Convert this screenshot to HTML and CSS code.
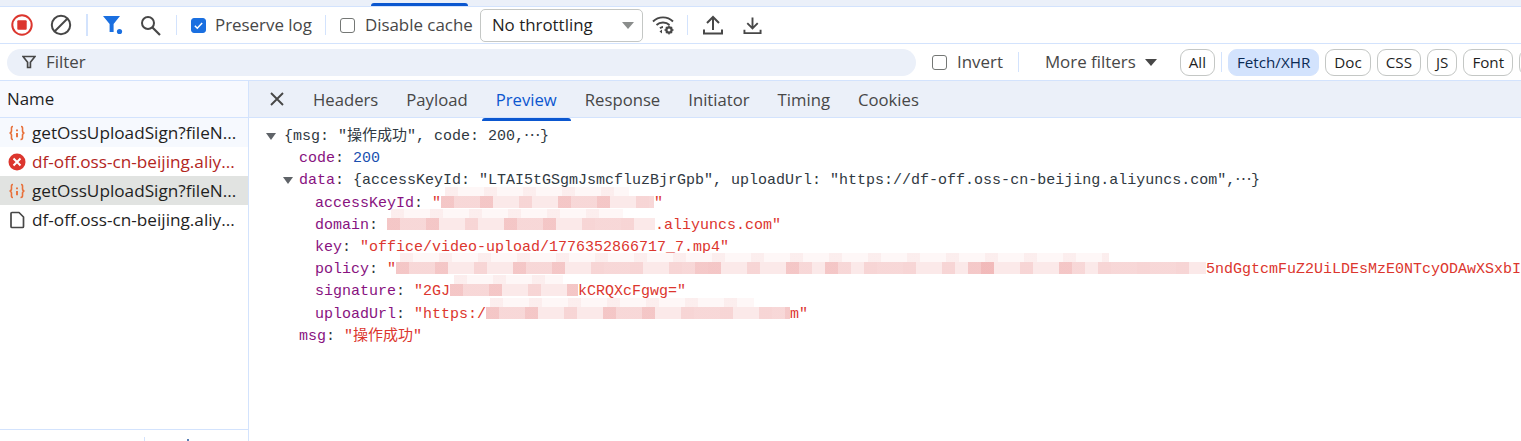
FILE: index.html
```html
<!DOCTYPE html>
<html lang="en">
<head>
<meta charset="utf-8">
<title>Network</title>
<link rel="stylesheet" href="styles.css">
</head>
<body>
<div class="topstrip"><span class="toptab"></span></div>
<div class="bar toolbar">
  <svg class="ic stop" viewBox="0 0 22 22"><circle cx="11" cy="11" r="9.7" fill="none" stroke="#dc362e" stroke-width="2"/><rect x="6.3" y="6.3" width="9.4" height="9.4" rx="1" fill="#dc362e"/></svg>
  <svg class="ic clear" viewBox="0 0 22 22"><circle cx="11" cy="11" r="9.2" fill="none" stroke="#474747" stroke-width="2"/><path d="M4.5 17.5 17.5 4.5" stroke="#474747" stroke-width="2"/></svg>
  <i class="sep s1"></i>
  <svg class="ic funnel" viewBox="0 0 20 20"><path d="M0 1h17l-6.4 8v8H6.6V9z" fill="#1a6fe0"/><circle cx="16.5" cy="16.5" r="2.6" fill="#1a6fe0"/></svg>
  <svg class="ic search" viewBox="0 0 21 21"><circle cx="8" cy="8" r="6" fill="none" stroke="#474747" stroke-width="2"/><path d="m12.5 12.5 7.5 7.5" stroke="#474747" stroke-width="2.2"/></svg>
  <i class="sep s2"></i>
  <span class="check on"><svg viewBox="0 0 16 16"><path d="m3.5 8.3 3 3 6-6.3" fill="none" stroke="#fff" stroke-width="1.9"/></svg></span>
  <span class="lbl preserve">Preserve log</span>
  <i class="sep s3"></i>
  <span class="check"></span>
  <span class="lbl disable">Disable cache</span>
  <span class="select"><span class="lift">No throttling</span><i class="caret"></i></span>
  <svg class="ic wifi" viewBox="0 0 23 20"><path d="M1 6.5C6.500 1 15.500 1 21 6.500M4.500 10c3.500-3.300 9.500-3.300 13 0M8 13.300c1-.9 2-1.300 3-1.300" fill="none" stroke="#474747" stroke-width="1.900"/><path d="m10 14.500-2.500 2 2.500 2z" fill="#474747"/><circle cx="17" cy="15" r="2.600" fill="none" stroke="#474747" stroke-width="2.200"/><path d="M17 10.500v1.500M17 18v1.500M12.500 15H14M20 15h1.500M13.900 11.900l1 1M19.100 17.100l1 1M13.900 18.100l1-1M19.100 12.900l1-1" stroke="#474747" stroke-width="1.300"/></svg>
  <i class="sep s4"></i>
  <svg class="ic up" viewBox="0 0 20 20"><path d="M10 15V2M4 8l6-6 6 6" fill="none" stroke="#474747" stroke-width="2"/><path d="M1 14.500V18.500H19V14.500" fill="none" stroke="#474747" stroke-width="2"/></svg>
  <svg class="ic down" viewBox="0 0 20 20"><path d="M10 1.500V12M4.500 7.500 10 13l5.500-5.500" fill="none" stroke="#474747" stroke-width="2"/><path d="M1.500 14.500v3.500h17v-3.500" fill="none" stroke="#474747" stroke-width="2"/></svg>
</div>
<div class="bar filterbar">
  <div class="filter">
    <svg class="ic fi" viewBox="0 0 14 14"><path d="M1 1.500h12L8.400 7.300v5.200H5.600V7.300z" fill="none" stroke="#474747" stroke-width="1.700"/></svg>
    <span class="lift">Filter</span>
  </div>
  <span class="check inv"></span>
  <span class="lbl invert">Invert</span>
  <i class="sep s5"></i>
  <span class="lbl more">More filters</span><i class="caret dark"></i>
  <span class="chip all">All</span>
  <i class="sep s6"></i>
  <span class="chip active">Fetch/XHR</span>
  <span class="chip">Doc</span>
  <span class="chip">CSS</span>
  <span class="chip">JS</span>
  <span class="chip">Font</span>
  <span class="chip stub"></span>
</div>
<div class="main">
  <aside class="side">
    <div class="namehead">Name</div>
    <div class="row tint"><svg class="fi-json" viewBox="0 0 18 18"><path d="M5 2.500C3 2.500 3.500 4 3.500 6.500 3.500 8 3 9 1.500 9 3 9 3.500 10 3.500 11.500 3.500 14 3 15.500 5 15.500M13 2.500c2 0 1.500 1.500 1.500 4 0 1.500.5 2.500 2 2.500-1.500 0-2 1-2 2.500 0 2.500.5 4-2 4" fill="none" stroke="#e8703a" stroke-width="1.600"/><path d="M9 5.500v1.800M9 9v4.200" stroke="#e8703a" stroke-width="1.900"/></svg><span>getOssUploadSign?fileN...</span></div>
    <div class="row err"><svg class="fi-err" viewBox="0 0 18 18"><circle cx="9" cy="9" r="8.500" fill="#dc362e"/><path d="m5.500 5.500 7 7M12.500 5.500l-7 7" stroke="#fff" stroke-width="2"/></svg><span>df-off.oss-cn-beijing.aliy...</span></div>
    <div class="row sel"><svg class="fi-json" viewBox="0 0 18 18"><path d="M5 2.500C3 2.500 3.500 4 3.500 6.500 3.500 8 3 9 1.500 9 3 9 3.500 10 3.500 11.500 3.500 14 3 15.500 5 15.500M13 2.500c2 0 1.500 1.500 1.500 4 0 1.500.5 2.500 2 2.500-1.500 0-2 1-2 2.500 0 2.500.5 4-2 4" fill="none" stroke="#e8703a" stroke-width="1.600"/><path d="M9 5.500v1.800M9 9v4.200" stroke="#e8703a" stroke-width="1.900"/></svg><span>getOssUploadSign?fileN...</span></div>
    <div class="row"><svg class="fi-doc" viewBox="0 0 18 18"><path d="M3 2.500a1 1 0 0 1 1-1h7l4.500 4.500v9.500a1 1 0 0 1-1 1H4a1 1 0 0 1-1-1z" fill="none" stroke="#474747" stroke-width="1.700" stroke-linejoin="round"/></svg><span>df-off.oss-cn-beijing.aliy...</span></div>
    <div class="sidefoot"><i class="fs"></i><i class="fd"></i></div>
  </aside>
  <section class="detail">
    <div class="tabs">
      <svg class="close" viewBox="0 0 14 14"><path d="m1 1 12 12M13 1 1 13" stroke="#474747" stroke-width="1.900"/></svg>
      <span class="tab">Headers</span>
      <span class="tab">Payload</span>
      <span class="tab current">Preview</span>
      <span class="tab">Response</span>
      <span class="tab">Initiator</span>
      <span class="tab">Timing</span>
      <span class="tab">Cookies</span>
    </div>
    <div class="tree">
      <div class="ln d0"><i class="tri"></i>{msg: <span class="cj">"操作成功"</span>, code: 200,<span class="dots">…</span>}</div>
      <div class="ln d1"><b>code</b>: <span class="num">200</span></div>
      <div class="ln d1"><i class="tri"></i><b>data</b>: {accessKeyId: "LTAI5tGSgmJsmcfluzBjrGpb", uploadUrl: "https://df-off.oss-cn-beijing.aliyuncs.com",<span class="dots">…</span>}</div>
      <div class="ln d2"><b>accessKeyId</b>: <em>"<span class="rd r1"></span>"</em></div>
      <div class="ln d2"><b>domain</b>: <em><span class="rd r2"></span>.aliyuncs.com"</em></div>
      <div class="ln d2"><b>key</b>: <em>"office/video-upload/1776352866717_7.mp4"</em></div>
      <div class="ln d2"><b>policy</b>: <em>"<span class="rd r3"></span>5ndGgtcmFuZ2UiLDEsMzE0NTcyODAwXSxbI</em></div>
      <div class="ln d2"><b>signature</b>: <em>"2GJ<span class="rd r4"></span>kCRQXcFgwg="</em></div>
      <div class="ln d2"><b>uploadUrl</b>: <em>"https:/<span class="rd r5"></span>m"</em></div>
      <div class="ln d1"><b>msg</b>: <em class="cj">"操作成功"</em></div>
    </div>
  </section>
</div>
</body>
</html>
```
FILE: styles.css
```css
* { box-sizing: border-box; }
html, body { margin: 0; height: 441px; overflow: hidden; background: #fff; }
body { font-family: "Open Sans", "Noto Sans", "Liberation Sans", sans-serif; font-size: 16.9px; color: #474747; }
i, em, b { font-style: normal; font-weight: 400; }

.topstrip { height: 7px; padding: 3px 0 0 371px; background: #ebf0f9; border-bottom: 1px solid #d3e3fd; }
.toptab { display: block; width: 97px; height: 3px; background: #0b57d0; border-radius: 3px 3px 0 0; }

.bar { display: flex; align-items: center; white-space: nowrap; }
.toolbar { height: 37px; border-bottom: 1px solid #d3e3fd; }
.filterbar { height: 37px; border-bottom: 1px solid #d3e3fd; overflow: hidden; }

.ic { display: block; flex: none; }
.sep { display: block; flex: none; width: 1px; height: 20px; background: #d3e3fd; }
.stop { width: 22px; height: 22px; margin-left: 11px; }
.clear { width: 22px; height: 22px; margin-left: 17px; }
.s1 { margin-left: 14px; width: 2px; height: 22px; }
.funnel { width: 20px; height: 20px; margin-left: 15px; }
.search { width: 21px; height: 21px; margin-left: 17px; }
.s2 { margin-left: 15px; }
.check { display: block; flex: none; width: 15px; height: 15px; margin-left: 14px; border: 1.500px solid #747775; border-radius: 3px; background: #fff; }
.check.on { background: #1a6fe0; border-color: #1a6fe0; }
.check svg { display: block; width: 100%; height: 100%; }
.lbl, .lift { display: block; flex: none; padding-bottom: 2px; }
.preserve { margin-left: 9px; }
.s3 { margin-left: 13px; }
.disable { margin-left: 10px; width: 108px; }
.select { flex: none; display: flex; align-items: center; justify-content: space-between; width: 163px; height: 33px; margin-left: 7px; padding: 0 8px 0 11px; border: 1px solid #c4c7c5; border-radius: 5px; color: #1f1f1f; }
.caret { display: block; flex: none; width: 0; height: 0; border: 6px solid transparent; border-top: 7px solid #8a8d8c; border-bottom: 0; }
.caret.dark { border-top-color: #474747; margin-left: 9px; }
.wifi { width: 23px; height: 20px; margin-left: 9px; }
.s4 { margin-left: 12px; }
.up { width: 20px; height: 20px; margin-left: 15px; }
.down { width: 19px; height: 19px; margin-left: 20px; }

.filter { flex: none; display: flex; align-items: center; width: 909px; height: 27px; margin-left: 7px; padding-left: 15px; background: #ebf0f9; border-radius: 14px; }
.fi { width: 14px; height: 14px; margin-right: 10px; }
.inv { margin-left: 16px; }
.invert { margin-left: 10px; }
.s5 { margin-left: 15px; }
.more { margin-left: 26px; }
.chip { display: block; flex: none; height: 27px; line-height: 24px; padding: 0 8px; margin-left: 6px; border: 1px solid #c4c7c5; border-radius: 9px; font-size: 15.200px; color: #1f1f1f; }
.all { margin-left: 23px; }
.s6 { margin-left: 6px; margin-right: 0; }
.active { background: #d3e3fd; border-color: #d3e3fd; color: #0a2a55; }
.stub { width: 30px; }

.main { display: flex; height: 360px; }
.side { flex: none; width: 249px; height: 360px; border-right: 1px solid #d3e3fd; display: flex; flex-direction: column; }
.namehead { flex: none; height: 37px; line-height: 36px; padding-left: 7px; background: #f7f9fe; border-bottom: 1px solid #d3e3fd; color: #1f1f1f; }
.row { flex: none; display: flex; align-items: center; height: 29px; padding-left: 8px; color: #1f1f1f; white-space: nowrap; font-size: 17.200px; }
.row span { margin-left: 6px; }
.tint { background: #f6f9fe; }
.err { color: #b3261e; }
.sel { background: #e1e3e1; }
.row svg { flex: none; width: 18px; height: 18px; }
.sidefoot { margin-top: auto; height: 12px; border-top: 1px solid #d3e3fd; position: relative; }
.fs { position: absolute; left: 144px; top: 7px; width: 1px; height: 4px; background: #d3e3fd; }
.fd { position: absolute; left: 187px; top: 9px; width: 2px; height: 2px; background: #5a7fb5; }

.detail { flex: 1; min-width: 0; display: flex; flex-direction: column; }
.tabs { flex: none; display: flex; align-items: center; gap: 28px; height: 37px; padding-left: 21px; background: #ebf0f9; border-bottom: 1px solid #d3e3fd; font-size: 16.700px; }
.close { flex: none; width: 14px; height: 14px; margin-right: 1px; }
.tab { display: block; flex: none; position: relative; }
.current { color: #0b57d0; }
.current::after { content: ""; position: absolute; left: -14px; right: -14px; top: 30px; height: 3px; background: #0b57d0; border-radius: 3px 3px 0 0; }

.tree { padding-top: 8px; font-family: "Liberation Mono", "Noto Sans CJK SC", monospace; font-size: 15px; color: #303942; overflow: hidden; }
.ln { position: relative; height: 22.200px; line-height: 22px; white-space: pre; }
.d0 { padding-left: 35px; }
.d1 { padding-left: 50px; }
.d2 { padding-left: 66px; }
.ln b { color: #881280; }
.ln em { color: #dc362e; }
.cj { line-height: 0; }
.d0 .cj { color: #303942; }
.dots { font-family: "Noto Sans CJK SC", monospace; line-height: 0; vertical-align: 4px; }
.num { color: #1a4fb0; }
.tri { position: absolute; top: 7px; width: 0; height: 0; border: 5.500px solid transparent; border-top: 7px solid #5f6368; border-bottom: 0; }
.d0 .tri { left: 17px; }
.d1 .tri { left: 34px; }

.rd { display: inline-block; position: relative; height: 12px; vertical-align: -1px;
  background:
    repeating-linear-gradient(90deg, rgba(226,110,110,.16) 0 13px, transparent 13px 39px),
    repeating-linear-gradient(90deg, transparent 0 26px, rgba(226,110,110,.14) 26px 52px, transparent 52px 91px),
    repeating-linear-gradient(90deg, rgba(226,110,110,.14) 0 26px, transparent 26px 143px),
    #fbe9e9;
}
.rd::before { content: ""; position: absolute; left: 4px; right: 12%; bottom: 100%; height: 9px;
  background:
    repeating-linear-gradient(90deg, rgba(226,130,130,.08) 0 13px, transparent 13px 39px),
    #fef7f7;
}
.r1 { width: 213px; }
.r2 { width: 268px; }
.r3 { width: 810px; }
.r4 { width: 128px; }
.r5 { width: 304px; }
```
